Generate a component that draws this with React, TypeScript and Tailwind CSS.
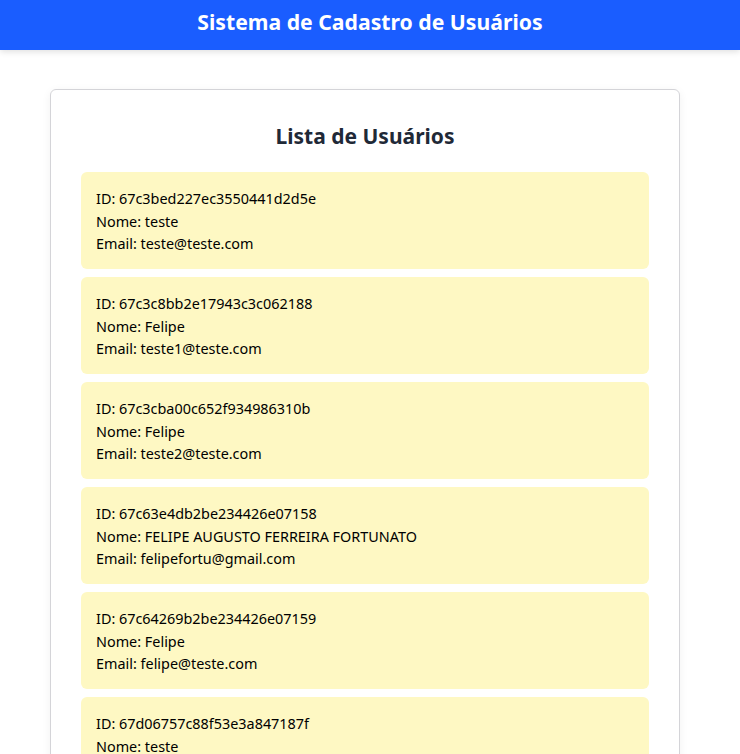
import React from "react";

interface Usuario {
  id: string;
  nome: string;
  email: string;
}

const usuarios: Usuario[] = [
  { id: "67c3bed227ec3550441d2d5e", nome: "teste", email: "teste@teste.com" },
  { id: "67c3c8bb2e17943c3c062188", nome: "Felipe", email: "teste1@teste.com" },
  { id: "67c3cba00c652f934986310b", nome: "Felipe", email: "teste2@teste.com" },
  {
    id: "67c63e4db2be234426e07158",
    nome: "FELIPE AUGUSTO FERREIRA FORTUNATO",
    email: "felipefortu@gmail.com",
  },
  { id: "67c64269b2be234426e07159", nome: "Felipe", email: "felipe@teste.com" },
  { id: "67d06757c88f53e3a847187f", nome: "teste", email: "teste@teste.com" },
];

export default function App() {
  return (
    <div className="min-h-screen bg-white font-['Noto_Sans',sans-serif] text-black">
      <header className="h-[50px] bg-[#1a5dff] flex items-center justify-center shadow-[0_2px_6px_rgba(0,0,0,0.12)]">
        <h1 className="text-[21.2px] font-bold text-white leading-none -mt-[7px]">
          Sistema de Cadastro de Usuários
        </h1>
      </header>

      <main className="mt-[39px] mx-[50px] w-[630px] border border-[#d4d4d8] rounded-md shadow-[0_2px_10px_rgba(0,0,0,0.06)] px-[30px] pt-[30px] pb-6">
        <h2 className="text-[21px] font-bold text-[#1f2937] text-center leading-8 mb-5">
          Lista de Usuários
        </h2>
        <ul className="flex flex-col gap-2">
          {usuarios.map((u) => (
            <li
              key={u.id}
              className="bg-[#fef8c3] rounded-md px-[15px] pt-[16px] pb-[13.5px] text-[14.4px] leading-[22.5px]"
            >
              <p>ID: {u.id}</p>
              <p>Nome: {u.nome}</p>
              <p>Email: {u.email}</p>
            </li>
          ))}
        </ul>
      </main>
    </div>
  );
}
